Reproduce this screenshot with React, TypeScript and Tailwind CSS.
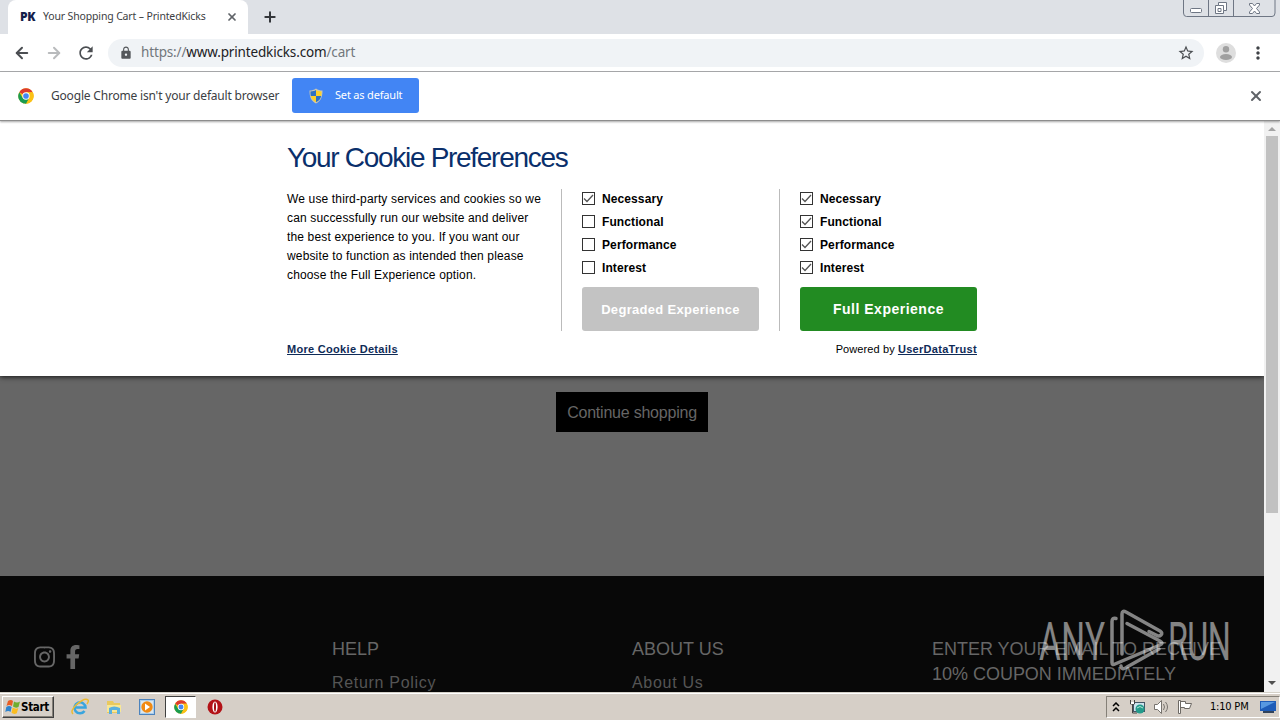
import { ArrowLeft, ArrowRight, Plus, X } from 'lucide-react';
import { FaFacebookF, FaInstagram } from 'react-icons/fa';
import { MdLock, MdMoreVert, MdRefresh, MdStarBorder } from 'react-icons/md';

const OPTIONS = ['Necessary', 'Functional', 'Performance', 'Interest'];

function ChromeLogo({ className }: { className: string }) {
  return (
    <svg viewBox="0 0 48 48" className={className}>
      <circle cx="24" cy="24" r="23" fill="#fbc116" />
      <path d="M24 24 4 12.6A23 23 0 0 1 44 12.6H24z" fill="#dd3b2e" />
      <path d="M4 12.6 14 30l10 5-7 11.5A23 23 0 0 1 4 12.6z" fill="#1a9c50" />
      <path d="M14 29.5 24 24l10 5.5-9.5 17.5a23 23 0 0 1-8-1.2z" fill="#1a9c50" />
      <path d="M24 13h20.3A23 23 0 0 1 24.5 47L34 30z" fill="#fbc116" />
      <circle cx="24" cy="24" r="11" fill="#fff" />
      <circle cx="24" cy="24" r="8.5" fill="#4587f3" />
    </svg>
  );
}

function Shield() {
  return (
    <svg viewBox="0 0 14 16" className="h-4 w-3.5">
      <path d="M7 .5c2 1.5 4 2 6.5 2C13.5 9 12 13 7 15.5 2 13 .5 9 .5 2.5 3 2.5 5 2 7 .5z" fill="#c9c7b5" />
      <path d="M7 2v6H1.8A18 18 0 0 1 1.5 3.5C4 3.4 5.5 3 7 2z" fill="#2d71c4" />
      <path d="M7 2v6h5.2c.2-1.3.3-2.9.3-4.5C10 3.4 8.5 3 7 2z" fill="#fbd02b" />
      <path d="M7 8v6.3C4 12.8 2.5 11 1.8 8z" fill="#fbd02b" />
      <path d="M7 8v6.3c3-1.5 4.5-3.3 5.2-6.3z" fill="#2d71c4" />
    </svg>
  );
}

function TabStrip() {
  return (
    <div className="relative flex h-[34px] bg-[#dee1e6] pl-2">
      <div className="flex w-60 items-center rounded-t-lg bg-white pl-3">
        <span className="w-[23px] font-['Open_Sans',sans-serif] text-xs font-extrabold tracking-[-0.3px] text-[#14204a]">PK</span>
        <span className="w-[183px] whitespace-nowrap text-[10.5px] tracking-[-0.15px] text-[#3c4043]">Your Shopping Cart – PrintedKicks</span>
        <X className="h-3 w-3 text-[#5f6368]" strokeWidth={3.5} />
      </div>
      <div className="flex w-11 items-center justify-center">
        <Plus className="h-4 w-4 text-[#33363a]" strokeWidth={3} />
      </div>
      <svg viewBox="0 0 94 18" className="absolute top-0 right-[3px] h-[18px] w-[94px]" fill="none" stroke="#6e7684">
        <path d="M.5 0v13q0 3.5 3 3.5H89q3 0 3-3.5V0M25.5 0v16.5M50.5 0v16.5" />
        <rect x="7.5" y="8.5" width="11" height="4" rx="1" fill="#fff" />
        <path d="M35.5 2.5h8v8h-3v3h-8v-8h3z" fill="#fff" />
        <path d="M35.5 5.5h5v5M35 8.5h3v3h-3z" />
        <path d="M66.5 3.5h3l2 2.5 2-2.5h3v1.5l-3 3.5 3 3.5v1.5h-3l-2-2.5-2 2.5h-3v-1.5l3-3.5-3-3.5z" fill="#fff" />
      </svg>
    </div>
  );
}

function Toolbar() {
  return (
    <div className="flex h-[38px] items-center border-b border-[#a9abad] bg-white pl-[13px]">
      <ArrowLeft className="mr-[14px] h-[18px] w-[18px] text-[#4b4e52]" strokeWidth={2.6} />
      <ArrowRight className="mr-[13px] h-[18px] w-[18px] text-[#b9bbbd]" strokeWidth={2.6} />
      <MdRefresh className="mr-3 h-5 w-5 text-[#4b4e52]" />
      <div className="flex h-7 w-[1096px] items-center rounded-full bg-[#f0f3f6] pl-[11px]">
        <MdLock className="mr-2 h-3.5 w-3.5 text-[#54575b]" />
        <span className="grow whitespace-nowrap text-[13.5px] tracking-[-0.15px] text-[#72777c]">
          https://<span className="text-[#202124]">www.printedkicks.com</span>/cart
        </span>
        <MdStarBorder className="mr-[9px] h-[18px] w-[18px] text-[#4b4e52]" />
      </div>
      <svg viewBox="0 0 20 20" className="ml-3 h-5 w-5">
        <circle cx="10" cy="10" r="10" fill="#dedede" />
        <circle cx="10" cy="6.3" r="3.2" fill="#a0a0a0" />
        <ellipse cx="10" cy="14" rx="6" ry="3" fill="#a0a0a0" />
      </svg>
      <MdMoreVert className="ml-3 h-5 w-5 text-[#3f4246]" />
    </div>
  );
}

function InfoBar() {
  return (
    <div className="relative z-10 flex h-[49px] items-center border-b border-[#8d8d8d] bg-white pb-px pl-[18px] shadow-[0_1px_2px_rgba(0,0,0,0.35)]">
      <ChromeLogo className="h-4 w-4" />
      <span className="ml-[17px] w-[241px] whitespace-nowrap text-xs tracking-[-0.19px] text-[#3c4043]">
        Google Chrome isn't your default browser
      </span>
      <button className="flex h-[35px] w-[127px] items-center rounded-[3px] bg-[#4285f4] pl-[17px] text-white">
        <Shield />
        <span className="ml-3 whitespace-nowrap text-[11px] tracking-[-0.18px]">Set as default</span>
      </button>
      <X className="mr-4 ml-auto h-4 w-4 text-[#5f6368]" strokeWidth={3} />
    </div>
  );
}

function Options({ checked }: { checked: string[] }) {
  return (
    <div className="flex flex-col gap-1">
      {OPTIONS.map((option) => (
        <div key={option} className="flex h-[19px] items-center">
          <svg viewBox="0 0 13 13" className="mr-[7px] h-[13px] w-[13px]" fill="none">
            <rect x=".5" y=".5" width="12" height="12" fill="#fff" stroke="#333" />
            {checked.includes(option) && <path d="m2 6.5 3 3 6-6.5" stroke="#555" strokeWidth="1.3" />}
          </svg>
          <span className="text-xs font-bold tracking-[0.1px] whitespace-nowrap">{option}</span>
        </div>
      ))}
    </div>
  );
}

function CookiePanel() {
  return (
    <section className="relative h-[255px] bg-white pt-[21px] text-black shadow-[0_1px_5px_rgba(0,0,0,0.8)]">
      <div className="mx-auto w-[690px]">
        <h1 className="mb-3 h-[35px] text-[28px] leading-[31px] tracking-[-1.3px] whitespace-nowrap text-[#0a2f6b]">Your Cookie Preferences</h1>
        <div className="flex h-[142px]">
          <p className="w-[274px] pt-px text-xs leading-[19px] tracking-[0.15px]">
            We use third-party services and cookies so we<br />
            can successfully run our website and deliver<br />
            the best experience to you. If you want our<br />
            website to function as intended then please<br />
            choose the Full Experience option.
          </p>
          <div className="w-[218px] border-l border-[#bbb] px-5">
            <Options checked={['Necessary']} />
            <button className="mt-2.5 h-11 w-[177px] rounded-[3px] bg-[#c3c3c3] pt-0.5 text-[13px] font-bold tracking-[0.3px] whitespace-nowrap text-white">
              Degraded Experience
            </button>
          </div>
          <div className="w-[198px] border-l border-[#bbb] pl-5">
            <Options checked={OPTIONS} />
            <button className="mt-2.5 h-11 w-[177px] rounded-[3px] bg-[#228b22] text-sm font-bold tracking-[0.5px] whitespace-nowrap text-white">
              Full Experience
            </button>
          </div>
        </div>
        <div className="mt-2.5 flex justify-between text-[11px] leading-4">
          <a className="font-bold tracking-[0.3px] text-[#0f2b57] underline">More Cookie Details</a>
          <span className="tracking-[0.1px]">
            Powered by <a className="font-bold tracking-[0.3px] text-[#0f2b57] underline">UserDataTrust</a>
          </span>
        </div>
      </div>
    </section>
  );
}

function Footer() {
  return (
    <footer className="flex h-[116px] overflow-hidden bg-[#080808] pt-[61px] pl-[33px] text-[#666]">
      <div className="flex w-[299px] gap-[9px] pt-2">
        <FaInstagram className="h-6 w-[23px]" />
        <FaFacebookF className="h-6 w-4" />
      </div>
      <div className="w-[300px]">
        <h2 className="text-lg leading-[25px]">HELP</h2>
        <p className="mt-2 text-base leading-[26px] tracking-[0.7px] text-[#555]">Return Policy</p>
      </div>
      <div className="w-[300px]">
        <h2 className="text-lg leading-[25px]">ABOUT US</h2>
        <p className="mt-2 text-base leading-[26px] tracking-[0.7px] text-[#555]">About Us</p>
      </div>
      <h2 className="text-lg leading-[25px] tracking-[-0.02px] whitespace-nowrap">
        ENTER YOUR EMAIL TO RECEIVE<br />10% COUPON IMMEDIATELY
      </h2>
    </footer>
  );
}

function Watermark() {
  return (
    <svg viewBox="0 0 192 64" className="absolute top-[488px] left-[1039px] h-16 w-48 text-white opacity-50" fill="none" stroke="currentColor">
      <g fill="currentColor" stroke="none" fontFamily="Roboto, sans-serif" fontSize="53">
        <text transform="translate(0 51) scale(.63 1)" textLength="105" lengthAdjust="spacing">ANY</text>
        <text transform="translate(129 51) scale(.61 1)" textLength="103" lengthAdjust="spacing">RUN</text>
      </g>
      <g strokeWidth="3.5" strokeLinecap="round" strokeLinejoin="round">
        <path d="M77 9.5q-4-1-4 3v41q0 3 3 1.5l45-19q4-2 0-4L88 14.500" />
        <path d="M83 45V5q0-4 4-2l34 19q3 2 1 4-2 2-5 0l-7-3.500" />
        <path d="M82 57q1 5 6 1l32-18" />
      </g>
    </svg>
  );
}

function Scrollbar() {
  return (
    <div className="relative flex w-4 flex-col items-center bg-[#f1f1f1] pt-px">
      <svg viewBox="0 0 16 14" className="h-3.5 w-4"><path d="M4 9h8L8 5z" fill="#a3a3a3" /></svg>
      <div className="h-[377px] w-3 bg-[#c1c1c1]" />
      <svg viewBox="0 0 16 14" className="mt-auto mb-0.5 h-3.5 w-4"><path d="M4 5h8L8 9z" fill="#505050" /></svg>
    </div>
  );
}

function Taskbar() {
  return (
    <div className="flex h-7 items-center border-t border-[#d5d1c8] bg-[#d6cfc7] pt-px pl-0.5 shadow-[inset_0_1px_0_#fff]">
      <button className="flex h-[22px] w-[52px] items-center border border-t-white border-r-[#404040] border-b-[#404040] border-l-white pl-0.5 shadow-[inset_-1px_-1px_0_#858078]">
        <svg viewBox="0 0 16 16" className="h-4 w-4 shrink-0">
          <path d="M3 2q3-2 5 0L7 7Q4 5 1.5 7z" fill="#e85d24" />
          <path d="M9 2.5q3 2 6 0L13.5 8q-3 1.5-5.5-.5z" fill="#6fad2e" />
          <path d="M1.3 8Q4 6 6.7 8L5.5 13q-2-2-5.200 0z" fill="#2d83ce" />
          <path d="M7.7 8.5q3 2 5.6.5l-1.5 5.3q-3 1.5-5.300-.5z" fill="#fbbd20" />
        </svg>
        <span className="pt-px font-['DejaVu_Sans_Condensed','DejaVu_Sans',sans-serif] text-[11.5px] font-bold tracking-[-0.3px] text-black">Start</span>
      </button>
      <svg viewBox="0 0 18 18" className="ml-[17px] h-[18px] w-[18px]" fill="none">
        <path d="M4 9.5h10.5A5.5 5.5 0 1 0 13.5 13" stroke="#3aa5de" strokeWidth="2.6" />
        <path d="M2 16Q-1 13 5 7 14-1 17 2q1 1-1 4" stroke="#edbb31" strokeWidth="1.5" />
      </svg>
      <svg viewBox="0 0 18 18" className="ml-4 h-[18px] w-[18px]">
        <path d="M2 3h6l1 2h6v10H2z" fill="#e9c95e" />
        <path d="M2 7h14v7H2z" fill="#f8e795" />
        <path d="M4 10q5-3 11 0v6h-3v-4H7v4H4z" fill="#5ab0df" />
      </svg>
      <svg viewBox="0 0 16 16" className="ml-4 h-4 w-4">
        <rect x=".5" y=".5" width="15" height="15" fill="#a9cdec" stroke="#4c83bd" />
        <rect x="2" y="2" width="12" height="12" fill="#dbe6ed" />
        <circle cx="8" cy="8" r="5.7" fill="#f08a14" />
        <path d="m6 4.5 5 3.5-5 3.5z" fill="#fff" />
      </svg>
      <div className="ml-2.5 flex h-[22px] w-[31px] items-center justify-center border border-t-[#404040] border-r-white border-b-white border-l-[#404040] bg-white">
        <ChromeLogo className="h-3.5 w-3.5" />
      </div>
      <svg viewBox="0 0 16 16" className="ml-[11px] h-4 w-4">
        <circle cx="8" cy="8" r="7.5" fill="#b31217" />
        <ellipse cx="8" cy="8" rx="2.6" ry="5.5" fill="#fff" />
        <ellipse cx="8" cy="8" rx="1" ry="4.8" fill="#a40f13" />
      </svg>
      <div className="ml-auto flex h-[22px] w-[174px] items-center border border-t-[#858078] border-r-white border-b-white border-l-[#858078]">
        <svg viewBox="0 0 8 10" className="ml-[5px] h-2.5 w-2" fill="none" stroke="#000" strokeWidth="1.5"><path d="m1 4 3-3 3 3M1 9l3-3 3 3" /></svg>
        <svg viewBox="0 0 16 16" className="ml-[9px] h-4 w-4">
          <rect x="4.5" y="3.5" width="11" height="9" fill="#cce4ee" stroke="#456" />
          <circle cx="11" cy="10" r="4.5" fill="#239b8b" />
          <path d="M8 9q3-3 6 0" fill="none" stroke="#b5e4d3" />
          <path d="M1.5 1v4h4V1M3.5 5v9H8" fill="none" stroke="#444" />
          <path d="M2 3h3v2H2z" fill="#fff" />
        </svg>
        <svg viewBox="0 0 18 16" className="ml-2 h-4 w-[18px]" fill="none" stroke="#77736e">
          <path d="M1.5 5.5h3l4-4v13l-4-4h-3z" fill="#fff" />
          <path d="M10.5 5q2 3 0 6M12.5 3q4 5 0 10" />
        </svg>
        <svg viewBox="0 0 18 16" className="ml-1.5 h-4 w-[18px]" fill="#fff" stroke="#6d6964">
          <path d="M1.5 1.5h2v13h-2zM3.5 2.5h5v2h6l-2 5h-5v-1h-4z" />
        </svg>
        <span className="ml-[15px] w-[50px] pt-px font-['DejaVu_Sans_Condensed','DejaVu_Sans',sans-serif] text-[11px] tracking-[-0.2px] whitespace-nowrap text-black">1:10 PM</span>
        <svg viewBox="0 0 17 14" className="h-3.5 w-[17px]">
          <path d="M0 1h16v10H0z" fill="#1e5cb8" />
          <path d="M1 2h14L1 9z" fill="#5798e1" />
          <path d="M3 12h11" stroke="#31435b" strokeWidth="2" />
        </svg>
      </div>
    </div>
  );
}

export default function App() {
  return (
    <div className="flex h-[720px] w-[1280px] flex-col overflow-hidden bg-white font-['Noto_Sans','Open_Sans',sans-serif]">
      <TabStrip />
      <Toolbar />
      <InfoBar />
      <div className="relative flex h-[571px]">
        <main className="w-[1264px] bg-[#666] font-['Liberation_Sans',Arial,sans-serif]">
          <CookiePanel />
          <div className="flex h-[200px] justify-center pt-4">
            <button className="h-10 w-[152px] bg-black pt-0.5 text-base tracking-[-0.22px] whitespace-nowrap text-[#666]">Continue shopping</button>
          </div>
          <Footer />
        </main>
        <Scrollbar />
        <Watermark />
      </div>
      <Taskbar />
    </div>
  );
}
